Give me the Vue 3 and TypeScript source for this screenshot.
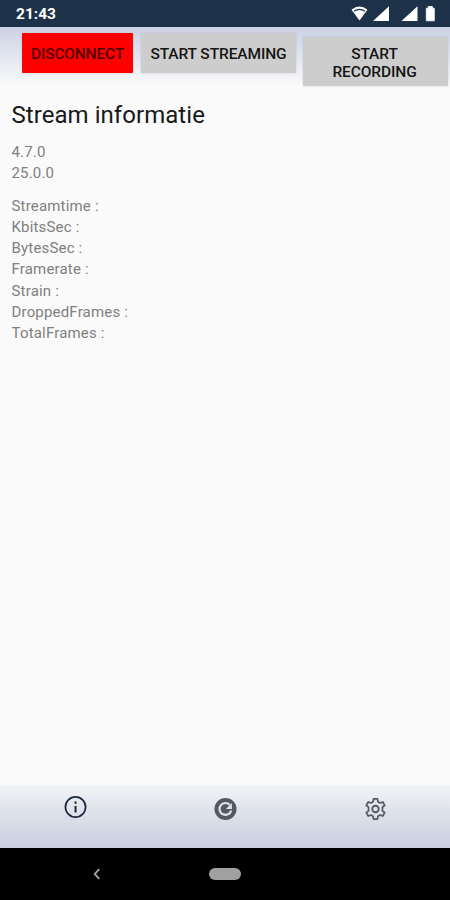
<script setup lang="ts">
interface Action {
  label: string
  kind: string
}

const actions: Action[] = [
  { label: 'DISCONNECT', kind: 'disconnect' },
  { label: 'START STREAMING', kind: 'stream' },
  { label: 'START RECORDING', kind: 'record' },
]

const versions: string[] = ['4.7.0', '25.0.0']

const stats: string[] = [
  'Streamtime :',
  'KbitsSec :',
  'BytesSec :',
  'Framerate :',
  'Strain :',
  'DroppedFrames :',
  'TotalFrames :',
]
</script>

<template>
  <div class="screen">
    <header class="status">
      <span class="clock">21:43</span>
      <svg class="status-icons" width="86" height="18" viewBox="0 0 86 18">
        <path d="M.5 4.800Q8.500-1.800 16.500 4.800L8.500 15.500Z" fill="#fff" />
        <path d="M3 6.300Q8.500 2.400 14 6.300" fill="none" stroke="#1d3149" stroke-width="1.200" />
        <path d="M22 16L38 1.200V16Z" fill="#fff" />
        <path d="M50.500 16L66.500 1.200V16Z" fill="#fff" />
        <path d="M75.300 3.200H77.200V1.500H81.400V3.200H83.300V15.800H75.300Z" fill="#fff" stroke="#fff" stroke-width=".8" stroke-linejoin="round" />
      </svg>
    </header>

    <div class="toolbar">
      <button v-for="a in actions" :key="a.kind" type="button" class="btn" :class="a.kind">{{ a.label }}</button>
    </div>

    <main class="content">
      <h1>Stream informatie</h1>
      <div class="group">
        <p v-for="v in versions" :key="v">{{ v }}</p>
      </div>
      <div class="group">
        <p v-for="s in stats" :key="s">{{ s }}</p>
      </div>
    </main>

    <nav class="tabs">
      <div class="tab active">
        <svg width="27" height="26" viewBox="0 0 24 24">
          <circle cx="12" cy="12" r="9.300" fill="none" stroke="currentColor" stroke-width="1.600" />
          <path fill="currentColor" d="M11.100 7h1.900v2h-1.900zm0 4h1.900v6h-1.900z" />
        </svg>
      </div>
      <div class="tab">
        <svg width="27" height="26" viewBox="0 0 24 24">
          <circle cx="12" cy="12" r="10.200" fill="currentColor" />
          <path d="M16 8.200A5.500 5.500 0 1 0 17.300 13.300" fill="none" stroke="#dfe3ec" stroke-width="2" />
          <path d="M17.900 6.500V12H12.400Z" fill="#dfe3ec" />
        </svg>
      </div>
      <div class="tab">
        <svg width="27" height="26" viewBox="0 0 24 24">
          <path fill="none" stroke="currentColor" stroke-width="1.600" stroke-linejoin="round" d="M10.200 2.700h3.600l.5 2.700 1.800 1.050 2.600-.95 1.800 3.100-2.100 1.750v3.300l2.100 1.750-1.800 3.100-2.600-.95-1.800 1.050-.5 2.700h-3.600l-.5-2.700-1.800-1.050-2.600.95-1.800-3.100 2.100-1.750v-3.300l-2.100-1.750 1.800-3.100 2.600.95 1.800-1.050z" />
          <circle cx="12" cy="12" r="3" fill="none" stroke="currentColor" stroke-width="1.700" />
        </svg>
      </div>
    </nav>

    <footer class="system">
      <svg class="back" width="10" height="14" viewBox="0 0 10 14">
        <path d="M7.300 2.200L2.700 7L7.300 11.800" fill="none" stroke="#a0a0a0" stroke-width="1.900" />
      </svg>
      <span class="home"></span>
    </footer>
  </div>
</template>

<style>
body {
  margin: 0;
}
</style>

<style scoped>
.screen {
  width: 450px;
  height: 900px;
  display: flex;
  flex-direction: column;
  overflow: hidden;
  background: #fafafa;
  font-family: Roboto, "Liberation Sans", sans-serif;
}
.status {
  box-sizing: border-box;
  height: 27px;
  flex: none;
  display: flex;
  justify-content: space-between;
  padding: 5px 13px 0 16px;
  background: #1d3149;
  color: #fff;
}
.clock {
  font-size: 15.500px;
  line-height: 19px;
  font-weight: 700;
}
.status-icons {
  display: block;
}
.toolbar {
  box-sizing: border-box;
  height: 59px;
  flex: none;
  display: flex;
  align-items: flex-start;
  padding: 6px 2px 0 22px;
  background: linear-gradient(#cbd2e5, #e2e6f0 50%, #fafafa);
}
.btn {
  box-sizing: border-box;
  height: 40px;
  border: 0;
  border-radius: 1px;
  padding: 1px 0 0;
  background: #cdcdcd;
  color: #151515;
  font: 500 15.500px/18px Roboto, "Liberation Sans", sans-serif;
  letter-spacing: -.1px;
  box-shadow: 0 0 2px rgba(80, 80, 100, .25);
}
.disconnect {
  width: 111px;
  background: #f00;
  color: #500000;
  letter-spacing: -.2px;
}
.stream {
  width: 155px;
  margin-left: 8px;
}
.record {
  width: 145px;
  height: 49px;
  margin: 4px 0 0 7px;
  padding: 2px 26px 0 24px;
}
.content {
  flex: 1;
  padding: 14px 12px 0 11.500px;
}
h1 {
  margin: 0 0 11px;
  color: #181818;
  font-size: 24px;
  line-height: 31px;
  font-weight: 400;
  letter-spacing: .05px;
}
.group {
  margin-bottom: 11px;
}
p {
  margin: 0;
  color: #808080;
  font-size: 15px;
  line-height: 21.300px;
  letter-spacing: .18px;
}
.tabs {
  height: 63px;
  flex: none;
  display: grid;
  grid-template-columns: repeat(3, 1fr);
  background: linear-gradient(#f2f4f5, #dde1ea 45%, #c9cfe0);
}
.tab {
  display: flex;
  justify-content: center;
  padding-top: 11px;
  color: #555962;
}
.tab.active {
  padding-top: 9px;
  color: #1c2940;
}
.system {
  height: 52px;
  flex: none;
  display: grid;
  grid-template-columns: 92px 1fr 92px;
  align-items: center;
  background: #000;
}
.back {
  justify-self: end;
  transform: translateX(10px);
}
.home {
  justify-self: center;
  width: 32px;
  height: 12px;
  border-radius: 6px;
  background: #a0a0a0;
}
</style>
